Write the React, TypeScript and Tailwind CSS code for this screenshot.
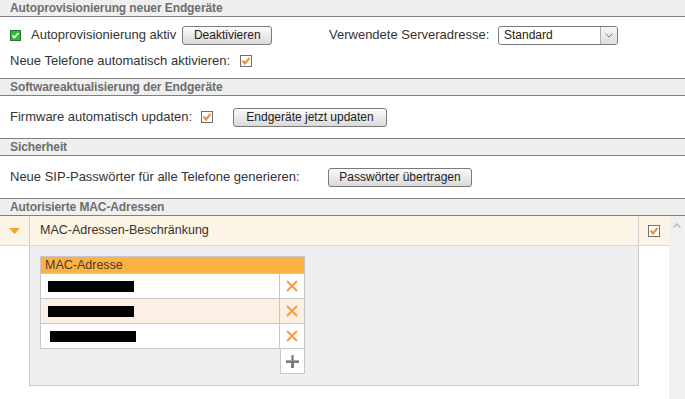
import React from "react";

function GreenCheck() {
  return (
    <svg width="11" height="11" viewBox="0 0 11 11" className="shrink-0">
      <rect x="0.5" y="0.5" width="10" height="10" fill="#22c322" stroke="#2f6f2f" />
      <path d="M2.5 5.5 L4.5 7.5 L8.5 3" fill="none" stroke="#ffffff" strokeWidth="1.8" />
    </svg>
  );
}

function OrangeCheck() {
  return (
    <svg width="12" height="12" viewBox="0 0 12 12" className="shrink-0">
      <rect x="0.5" y="0.5" width="11" height="11" fill="#ffffff" stroke="#6e6e6e" />
      <path d="M2.5 5.5 L5 8.5 L9.5 3" fill="none" stroke="#f0923a" strokeWidth="2.2" />
    </svg>
  );
}

function Btn({ children, w }: { children: React.ReactNode; w: string }) {
  return (
    <button
      className={`${w} h-[19px] rounded-[3px] border border-[#7a7a7a] bg-gradient-to-b from-[#fbfbfb] to-[#dadada] text-[12px] leading-[17px] text-[#222] shrink-0`}
    >
      {children}
    </button>
  );
}

function SectionHead({ title, first }: { title: string; first?: boolean }) {
  return (
    <div
      className={`bg-[#efefef] border-b border-[#808080] pl-[10px] text-[12px] leading-[16px] font-bold tracking-[-0.1px] text-[#6e6e6e] ${first ? "h-[17px]" : "h-[18px] border-t"}`}
    >
      {title}
    </div>
  );
}

function XIcon() {
  return (
    <svg width="12" height="12" viewBox="0 0 12 12">
      <path d="M1 1 L11 11 M11 1 L1 11" stroke="#f79b46" strokeWidth="2" />
    </svg>
  );
}

function PlusIcon() {
  return (
    <svg width="13" height="13" viewBox="0 0 13 13">
      <path d="M5 0 H8 V5 H13 V8 H8 V13 H5 V8 H0 V5 H5 Z" fill="#7a7a7a" />
      <path d="M5 0 H8 V5 H13 V6 H7 V1 H6 V6 H0 V5 H5 Z" fill="#a8a8a8" />
    </svg>
  );
}

const macRows = [
  { bg: "bg-white", bar: "ml-[7px]" },
  { bg: "bg-[#fcf0e4]", bar: "ml-[7px]" },
  { bg: "bg-white", bar: "ml-[9px]" },
];

export default function App() {
  return (
    <div className="w-[685px] h-[399px] bg-white overflow-hidden font-['Liberation_Sans',Arial,sans-serif] text-[13px] text-[#333]">
      <SectionHead title="Autoprovisionierung neuer Endgeräte" first />
      <div className="h-[61px] pt-[8px] pl-[10px]">
        <div className="flex items-center h-[20px]">
          <div className="flex items-center w-[319px]">
            <GreenCheck />
            <span className="ml-[10px] mr-[6px]">Autoprovisionierung aktiv</span>
            <Btn w="w-[90px]">Deaktivieren</Btn>
          </div>
          <span className="w-[169px]">Verwendete Serveradresse:</span>
          <div className="flex h-[19px] w-[120px] rounded-[3px] border border-[#7a7a7a] bg-white overflow-hidden">
            <span className="flex-1 pl-[5px] text-[12px] leading-[17px] text-[#222]">Standard</span>
            <div className="w-[17px] flex items-center justify-center border-l border-[#b0b0b0] bg-gradient-to-b from-[#f6f6f6] to-[#dedede]">
              <svg width="8" height="5" viewBox="0 0 8 5">
                <path d="M0.5 0.5 L4 4 L7.5 0.5" fill="none" stroke="#777" strokeWidth="1" />
              </svg>
            </div>
          </div>
        </div>
        <div className="flex items-center h-[20px] mt-[6px]">
          <span className="w-[230px]">Neue Telefone automatisch aktivieren:</span>
          <OrangeCheck />
        </div>
      </div>

      <SectionHead title="Softwareaktualisierung der Endgeräte" />
      <div className="h-[42px] pl-[10px] flex items-center">
        <span className="w-[191px]">Firmware automatisch updaten:</span>
        <OrangeCheck />
        <div className="w-[20px]" />
        <Btn w="w-[154px]">Endgeräte jetzt updaten</Btn>
      </div>

      <SectionHead title="Sicherheit" />
      <div className="h-[42px] pl-[10px] flex items-center">
        <span className="w-[318px]">Neue SIP-Passwörter für alle Telefone generieren:</span>
        <Btn w="w-[144px]">Passwörter übertragen</Btn>
      </div>

      <SectionHead title="Autorisierte MAC-Adressen" />
      <div className="flex">
        <div className="w-[669px]">
          <div className="flex h-[30px] bg-[#fcf4e4] border-b border-[#d8d8d8]">
            <div className="w-[30px] border-r border-[#cfcfcf] flex items-center justify-center">
              <svg width="11" height="6" viewBox="0 0 11 6">
                <path d="M0 0 H11 L5.5 6 Z" fill="#f6a035" />
              </svg>
            </div>
            <div className="flex-1 pl-[10px] flex items-center text-[12.5px]">MAC-Adressen-Beschränkung</div>
            <div className="w-[31px] border-l border-[#cfcfcf] flex items-center justify-center">
              <OrangeCheck />
            </div>
          </div>
          <div className="flex">
            <div className="w-[29px]" />
            <div className="w-[610px] h-[140px] bg-[#efefef] border-l border-r border-b border-[#c8c8c8] pt-[10px] pl-[10px]">
              <div className="w-[265px]">
                <div className="h-[18px] bg-[#fdb044] border border-[#c8c8c8] pl-[4px] text-[12.5px] leading-[16px] text-[#4a3a2c]">
                  MAC-Adresse
                </div>
                {macRows.map((r, i) => (
                  <div key={i} className={`flex h-[25px] border-x border-b border-[#c8c8c8] ${r.bg}`}>
                    <div className="flex-1 border-r border-[#c8c8c8] flex items-center">
                      <div className={`${r.bar} w-[86px] h-[11px] bg-black`} />
                    </div>
                    <div className="w-[24px] flex items-center justify-center">
                      <XIcon />
                    </div>
                  </div>
                ))}
                <div className="flex justify-end">
                  <div className="w-[25px] h-[25px] bg-white border-x border-b border-[#c8c8c8] flex items-center justify-center">
                    <PlusIcon />
                  </div>
                </div>
              </div>
            </div>
            <div className="flex-1" />
          </div>
        </div>
        <div className="w-[16px] h-[184px] bg-[#f0f0f0] flex justify-center pt-[7px]">
          <svg width="8" height="5" viewBox="0 0 8 5">
            <path d="M0.5 4.5 L4 1 L7.5 4.5" fill="none" stroke="#bdbdbd" strokeWidth="1.5" />
          </svg>
        </div>
      </div>
    </div>
  );
}
